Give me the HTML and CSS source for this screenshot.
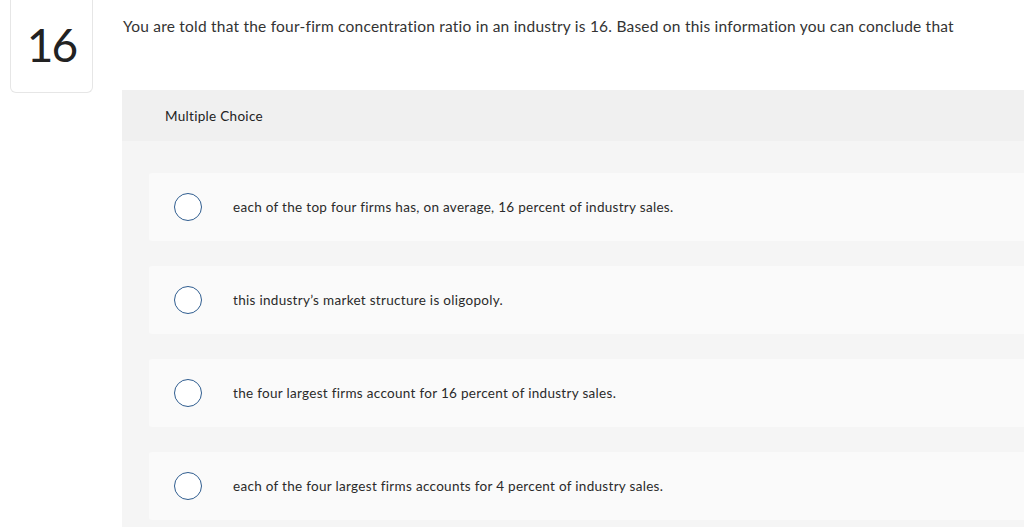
FILE: index.html
```
<!DOCTYPE html>
<html>
<head>
<meta charset="utf-8">
<link rel="stylesheet" href="styles.css">
</head>
<body>
<div class="page">
  <div class="side">
    <div class="qnum">16</div>
  </div>
  <div class="main">
    <p class="question">You are told that the four-firm concentration ratio in an industry is 16. Based on this information you can conclude that</p>
    <div class="panel">
      <div class="panel-head">Multiple Choice</div>
      <div class="panel-body">
        <div class="option"><span class="radio"></span><span class="label">each of the top four firms has, on average, 16 percent of industry sales.</span></div>
        <div class="option"><span class="radio"></span><span class="label">this industry’s market structure is oligopoly.</span></div>
        <div class="option"><span class="radio"></span><span class="label">the four largest firms account for 16 percent of industry sales.</span></div>
        <div class="option"><span class="radio"></span><span class="label">each of the four largest firms accounts for 4 percent of industry sales.</span></div>
      </div>
    </div>
  </div>
</div>
</body>
</html>
```
FILE: styles.css
```
html, body {
  margin: 0;
  padding: 0;
  background: #ffffff;
  overflow: hidden;
}
body {
  font-family: "Lato", "Open Sans", "Liberation Sans", sans-serif;
  font-variant-ligatures: none;
  color: #333333;
}
.page {
  display: flex;
  width: 1024px;
  height: 527px;
}
.side {
  width: 122px;
  flex: none;
}
.qnum {
  margin-left: 10px;
  width: 81px;
  height: 88px;
  border: 1px solid #e6e6e6;
  border-top: none;
  border-radius: 0 0 6px 6px;
  display: flex;
  align-items: center;
  justify-content: center;
  font-size: 46px;
  letter-spacing: -2px;
  color: #222222;
  padding-bottom: 4px;
  box-sizing: content-box;
}
.main {
  flex: 1;
  min-width: 0;
}
.question {
  margin: 0;
  padding: 16px 0 0 1px;
  font-size: 15.5px;
  letter-spacing: 0.22px;
  line-height: 20px;
  height: 20px;
  white-space: nowrap;
}
.panel {
  margin-top: 54px;
  background: #f5f5f5;
  height: 460px;
}
.panel-head {
  height: 51px;
  background: #f0f0f0;
  display: flex;
  align-items: center;
  padding-left: 43px;
  font-size: 13.5px;
  letter-spacing: 0.3px;
  color: #222222;
}
.panel-body {
  padding: 32px 0 0 27px;
  display: flex;
  flex-direction: column;
  gap: 25px;
}
.option {
  height: 68px;
  background: #fafafa;
  border-radius: 3px 0 0 3px;
  display: flex;
  align-items: center;
  padding-left: 25px;
}
.radio {
  width: 26px;
  height: 26px;
  border: 1.5px solid #2f5d8f;
  border-radius: 50%;
  background: #ffffff;
  flex: none;
}
.label {
  margin-left: 31px;
  font-size: 13.5px;
  letter-spacing: 0.3px;
  color: #2a2a2a;
}
```
